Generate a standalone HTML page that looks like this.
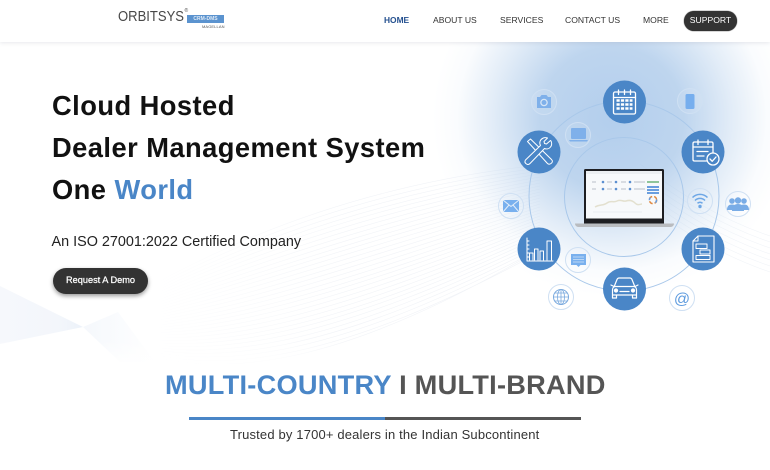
<!DOCTYPE html>
<html><head><meta charset="utf-8">
<style>
html,body{margin:0;padding:0;width:770px;height:470px;overflow:hidden;background:#fff;font-family:"Liberation Sans",Arial,sans-serif}
#root{position:relative;width:770px;height:470px;overflow:hidden;background:#fff;filter:blur(.3px)}
.t{position:absolute;white-space:nowrap;line-height:1}
#glow{position:absolute;left:0;top:0;width:770px;height:470px;background:radial-gradient(ellipse 180px 178px at 612px 118px,rgba(160,194,232,.8) 0%,rgba(165,197,232,.72) 40%,rgba(190,213,238,.45) 66%,rgba(225,236,247,.17) 86%,rgba(255,255,255,0) 100%)}
#hdr{position:absolute;left:0;top:0;width:770px;height:42px;background:#fff;box-shadow:0 1px 4px rgba(120,130,150,.18)}
.n{position:absolute;top:16px;font-size:8.6px;line-height:9px;color:#333;white-space:nowrap}
h1{position:absolute;margin:0;left:52px;font-size:27.3px;letter-spacing:.45px;line-height:30px;font-weight:700;color:#111;white-space:nowrap}
</style></head><body><div id="root">
<svg style="position:absolute;left:0;top:0" width="770" height="470" viewBox="0 0 770 470" fill="none">
<defs>
<path id="v" d="M640 200C680 230 720 255 770 272" stroke="#f1f4f8" stroke-width=".6"/>
<linearGradient id="fa" x1="0" x2="1"><stop offset="0" stop-color="#f6f8fc"/><stop offset=".7" stop-color="#f3f6fb"/><stop offset="1" stop-color="#ecf2fa"/></linearGradient>
<linearGradient id="fb" x1="0" x2="1"><stop offset="0" stop-color="#eef3fa"/><stop offset="1" stop-color="#fff"/></linearGradient>
<linearGradient id="ls" gradientUnits="userSpaceOnUse" x1="150" y1="0" x2="340" y2="0"><stop offset="0" stop-color="#f3f5f8" stop-opacity="0"/><stop offset="1" stop-color="#f1f3f7"/></linearGradient>
<linearGradient id="bot" x1="0" x2="0" y1="0" y2="1"><stop offset="0" stop-color="#fff" stop-opacity="0"/><stop offset="1" stop-color="#fff"/></linearGradient>
</defs>
<path d="M0 286L83 327L0 344Z" fill="url(#fa)"/>
<path d="M83 327L118 312L155 362L120 362Z" fill="url(#fb)" opacity=".6"/>
<path stroke="url(#ls)" stroke-width=".6" d="M83 327C200 250 350 185 540 165M83 327C200 255 350 191 540 168M83 327C200 260 350 197 540 171M83 327C200 265 350 203 540 174M83 327C200 270 350 208 540 177M83 327C200 275 350 214 540 180M83 327C200 280 350 220 540 183M83 327C200 285 350 226 540 186M83 327C200 290 350 232 540 189M83 327C200 295 350 238 540 192M83 327C200 300 350 243 540 195M83 327C200 305 350 249 540 198M83 327C200 310 350 255 540 201M83 327C200 315 350 261 540 204M83 327C200 320 350 267 540 207M83 327C200 325 350 273 540 210M83 327C200 330 350 279 540 213M83 327C200 335 350 285 540 216M83 327C200 340 350 290 540 219M83 327C200 345 350 296 540 222M83 327C200 350 350 302 540 225M83 327C200 355 350 308 540 228M83 327C200 360 350 314 540 231M83 327C200 365 350 320 540 234M83 327C200 370 350 325 540 237M83 327C200 375 350 331 540 240M83 327C200 380 350 337 540 243M83 327C200 385 350 343 540 246M83 327C200 390 350 349 540 249M83 327C200 395 350 355 540 252M83 327C200 400 350 360 530 255"/>
<rect x="0" y="340" width="770" height="28" fill="url(#bot)"/>
<use href="#v"/><use href="#v" y="-6"/><use href="#v" y="-12"/><use href="#v" y="-18"/><use href="#v" y="-24"/><use href="#v" y="-30"/><use href="#v" y="-36"/>
</svg>
<div id="glow"></div>

<svg style="position:absolute;left:0;top:0" width="770" height="470" viewBox="0 0 770 470" fill="none">
<circle cx="624" cy="196" r="95" stroke="#a9c8ea" stroke-width="1"/>
<circle cx="624" cy="197" r="59.5" stroke="#a9c8ea" stroke-width="1"/>

<g fill="#fff" fill-opacity=".07" stroke="#cfe0f3" stroke-width="1">
<circle cx="544" cy="102" r="12.5"/><circle cx="578" cy="135" r="12.5"/><circle cx="690" cy="101" r="12.5"/><circle cx="511" cy="206" r="12.5"/><circle cx="700" cy="201" r="12.5"/><circle cx="738" cy="204" r="12.5"/><circle cx="578" cy="260" r="12.5"/><circle cx="561" cy="297" r="12.5"/><circle cx="682" cy="298" r="12.5"/>
</g>

<g fill="#4a86c7">
<circle cx="624.5" cy="102" r="21.5"/><circle cx="539" cy="152" r="21.5"/><circle cx="703" cy="152" r="21.5"/><circle cx="539" cy="249" r="21.5"/><circle cx="703" cy="249" r="21.5"/><circle cx="624.5" cy="289" r="21.5"/>
</g>

<!-- small icons -->
<path d="M537 97h3l1.500-2h5l1.500 2h3v11h-14z" fill="#7fb0ea"/><circle cx="544" cy="102.500" r="3.800" fill="#d6e5f6"/><circle cx="544" cy="102.500" r="2.500" fill="#7fb0ea"/>
<rect x="571" y="128" width="15" height="11" rx="1" fill="#7fb0ea"/><path d="M569 140h19l-1 1.500h-17z" fill="#7fb0ea"/>
<rect x="685.500" y="94" width="9" height="15" rx="1.500" fill="#76aeee"/>
<rect x="503" y="200" width="16" height="12" rx="1" fill="#79b0ee"/><path d="M503 200l8 6.500 8-6.500M503 212l6-7M519 212l-6-7" stroke="#e4eef9" stroke-width="1"/>
<path d="M692.500 197.500a10.500 10.500 0 0 1 15 0M695 200.500a7 7 0 0 1 10 0M697.500 203.300a3.500 3.500 0 0 1 5 0" stroke="#6ea7e6" stroke-width="1.500"/><circle cx="700" cy="206.500" r="1.700" fill="#6ea7e6"/>
<g fill="#79ace6"><circle cx="732" cy="201" r="2.800"/><circle cx="738" cy="200.500" r="3.200"/><circle cx="744" cy="201" r="2.800"/><path d="M727 210c0-4 2-5.500 5-5.500s5 1.500 5 5.500zM739 210c0-4 2-5.500 5-5.500s5 1.500 5 5.500z"/><path d="M732 211c0-5 2.500-7 6-7s6 2 6 7z"/></g>
<path d="M571 254h15v11h-5.500l-2 2-2-2h-5.500z" fill="#79b0ee"/><path d="M573 257h11M573 259.500h11M573 262h11" stroke="#cfe2f6" stroke-width=".8"/>
<circle cx="561" cy="297" r="7.500" stroke="#79a9de" stroke-width="1"/><ellipse cx="561" cy="297" rx="3.500" ry="7.500" stroke="#79a9de" stroke-width=".8"/><path d="M553.500 297h15M555 293h12M555 301h12M561 289.500v15" stroke="#79a9de" stroke-width=".8"/>
<text x="682" y="304" text-anchor="middle" font-family="Liberation Sans,sans-serif" font-size="16" fill="#5f9cdf">@</text>

<!-- big icons -->
<g stroke="#fff" stroke-width="1.300" stroke-linejoin="round" stroke-linecap="round">
<!-- calendar -->
<rect x="613.500" y="92" width="22" height="22" rx="1.500"/><path d="M613.500 97.500h22M618.500 90v4.500M624.500 90v4.500M630.500 90v4.500"/>
<path d="M616.500 100.500h16M616.500 104.500h16M616.500 108.500h16" stroke-width="2.500" stroke-dasharray="3.200 1.200" stroke-linecap="butt"/>
<!-- tools -->
<path d="M527.500 141.500l3-2.500 21 20.500c1.500 1.500 1 3-.5 4s-2.500 1-3.500 0z" stroke-width="1"/>
<path d="M550.500 140.500l-4 3.500-2-.5-.5-2 3.500-3.500c-3.500-1-6.500.5-7.500 3.500-.5 1.500 0 3 .5 4l-15 14.500c-1 1.500-.5 3 1 4s2.500.5 3.500-.5l14.500-15c2 .8 4.500.5 6-1.500 1.500-1.500 1.500-4.500.5-6z" fill="#4a86c7" stroke-width="1"/>
<!-- task calendar -->
<path d="M706.500 161h-12c-1 0-1.500-.5-1.500-1.500v-16c0-1 .5-1.500 1.500-1.500h17c1 0 1.500.5 1.500 1.500v9"/><path d="M693 147h20M698 140v4.500M708 140v4.500M697 151.500h11M697 156h7"/>
<circle cx="713" cy="159" r="6" fill="#4a86c7"/><path d="M710 159l2.200 2.300 3.800-4.300"/>
<!-- chart -->
<path d="M527 238v23h26M527 241h2M527 245h2M527 249h2M527 253h2M527 257h2" stroke-width="1"/>
<path d="M529.500 260v-7h3.500v7M534.500 260v-11h3.500v11M540 260v-9h3.500v9M547 260v-19h4.500v19" stroke-width="1"/>
<!-- document -->
<path d="M698 236h16v26h-21v-21z" stroke-width="1.100"/><path d="M698 236v5h-5" stroke-width="1"/>
<rect x="696" y="244" width="11" height="4.500" stroke-width="1"/><rect x="700" y="250" width="10" height="4" fill="#4a86c7" stroke-width="1"/><rect x="696" y="255.500" width="14" height="4" stroke-width="1"/>
<!-- car -->
<path d="M614 287l3-7.500c.5-1 1-1.500 2-1.500h11c1 0 1.500.5 2 1.500l3 7.500" stroke-width="1.200"/><path d="M612.500 298v-8c0-2 1-3 2-3.500h20c1 .5 2 1.500 2 3.500v8M612.500 295h24" stroke-width="1.200"/><path d="M612.500 298h4v-3M636.500 298h-4v-3M620 291.500h9M611 285l3 1.500M638 285l-3 1.500" stroke-width="1.200"/><circle cx="616" cy="290.500" r="1.500" fill="#fff"/><circle cx="633" cy="290.500" r="1.500" fill="#fff"/>
</g>

<!-- laptop -->
<path d="M575 223.500h99c0 2-1.500 3.500-3.500 3.500h-92c-2 0-3.500-1.500-3.500-3.500z" fill="#b9bcc0"/>
<path d="M585.500 169h77c1 0 1.500.5 1.500 1.500V223.500h-80V170.500c0-1 .5-1.500 1.500-1.500z" fill="#1d1e22"/>
<rect x="586" y="171" width="76" height="47.500" fill="#f7f9fb"/>
<rect x="586" y="171" width="76" height="3" fill="#eceff2"/>
<g fill="#5b8fd0"><circle cx="603" cy="182" r="1.300"/><circle cx="616" cy="182" r="1.300"/><circle cx="630" cy="182" r="1.300"/><circle cx="603" cy="189" r="1.300"/><circle cx="616" cy="189" r="1.300"/><circle cx="630" cy="189" r="1.300"/></g>
<g fill="#b9c0c9"><rect x="592" y="181.500" width="4" height="1"/><rect x="607" y="181.500" width="5" height="1"/><rect x="621" y="181.500" width="5" height="1"/><rect x="634" y="181.500" width="11" height="1"/><rect x="592" y="188.500" width="4" height="1"/><rect x="607" y="188.500" width="5" height="1"/><rect x="621" y="188.500" width="5" height="1"/><rect x="634" y="188.500" width="11" height="1"/></g>
<g fill="#6a9ede"><rect x="647" y="186" width="12" height="2"/><rect x="647" y="189" width="12" height="2"/><rect x="647" y="192" width="12" height="2"/></g>
<rect x="647" y="181" width="12" height="2" fill="#8fc59a"/>
<path d="M595 207c5-3 8-1 12-4s6 0 10-2 6 1 9 0 6-1 9 2 5 1 7 1" stroke="#e3e0cf" stroke-width="1.500"/>
<path d="M593 212h49" stroke="#e6e9ed" stroke-width=".7"/>
<circle cx="653" cy="200" r="3.600" stroke="#e0873c" stroke-width="1.500" stroke-dasharray="4 2"/><circle cx="653" cy="200" r="3.600" stroke="#6a9ede" stroke-width="1.500" stroke-dasharray="3 8"/>
</svg>

<div id="hdr"></div>
<div class="t" style="left:118px;top:10px;font-size:14.500px;color:#484848;font-weight:400;transform:scaleX(.9);transform-origin:0 0">ORBITSYS</div>
<div class="t" style="left:184.500px;top:9px;font-size:5px;color:#555">®</div>
<div style="position:absolute;left:187px;top:15px;width:37px;height:7.500px;background:#5b93cf"></div>
<div class="t" style="left:187px;top:16.500px;width:37px;text-align:center;font-size:5px;font-weight:700;color:#dfeaf6">CRM-DMS</div>
<div class="t" style="left:202px;top:25px;font-size:4px;color:#555;letter-spacing:.1px">MAGELLAN</div>

<div class="n" style="left:384px;color:#24508f;font-weight:700;font-size:8.400px">HOME</div>
<div class="n" style="left:433px">ABOUT US</div>
<div class="n" style="left:500px">SERVICES</div>
<div class="n" style="left:565px">CONTACT US</div>
<div class="n" style="left:643px">MORE</div>
<div style="position:absolute;left:684px;top:11px;width:53px;height:20px;border-radius:10px;background:#333;box-shadow:0 0 1px #000"></div>
<div class="n" style="left:684px;width:53px;text-align:center;color:#fff">SUPPORT</div>

<h1 style="top:91px">Cloud Hosted</h1>
<h1 style="top:133px">Dealer Management System</h1>
<h1 style="top:175px">One <span style="color:#4a86c7">World</span></h1>
<div class="t" style="left:51.500px;top:234.500px;font-size:14.400px;color:#222">An ISO 27001:2022 Certified Company</div>

<div style="position:absolute;left:53px;top:268px;width:95px;height:26px;border-radius:13px;background:#333;box-shadow:0 2px 4px rgba(0,0,0,.4)"></div>
<div class="t" style="left:53px;top:276px;width:95px;text-align:center;font-size:9.200px;color:#fff;-webkit-text-stroke:.25px #fff">Request A Demo</div>

<div class="t" style="left:165px;top:371px;font-size:27.200px;letter-spacing:.25px;font-weight:700;color:#4a86c7">MULTI-COUNTRY <span style="color:#555">I MULTI-BRAND</span></div>
<div style="position:absolute;left:189px;top:417px;width:196px;height:3px;background:#4a86c7"></div>
<div style="position:absolute;left:385px;top:417px;width:196px;height:3px;background:#555"></div>
<div class="t" style="left:230px;top:428px;font-size:13px;color:#333;letter-spacing:.16px">Trusted by 1700+ dealers in the Indian Subcontinent</div>
</div></body></html>
